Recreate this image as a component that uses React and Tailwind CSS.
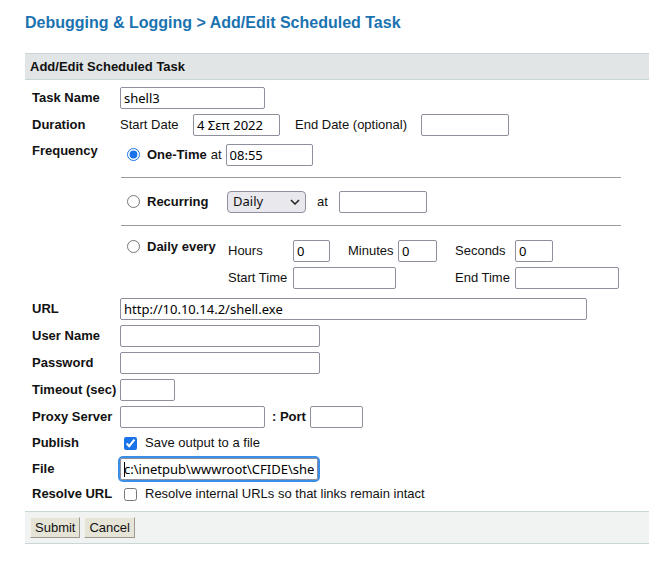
const inputCls =
  'h-[22px] border border-[#8f8f9d] rounded-[2px] bg-white px-[3px] text-[13px] text-black font-["Noto_Sans",sans-serif] outline-none';

function Field({ w, value = '' }) {
  return <input type="text" defaultValue={value} className={inputCls} style={{ width: w }} />;
}

function Row({ label, children, h = 'h-[27px]' }) {
  return (
    <div className={'flex items-center ' + h}>
      <div className="w-[95px] shrink-0 whitespace-nowrap pl-[7px] font-bold">{label}</div>
      <div className="flex items-center">{children}</div>
    </div>
  );
}

const Radio = ({ checked }) => (
  <input type="radio" name="freq" defaultChecked={checked} className="m-0 h-[13px] w-[13px] accent-[#1a73e8]" />
);

export default function App() {
  return (
    <div className='min-h-[563px] bg-white text-[13px] text-[#111] font-["Liberation_Sans",Arial,sans-serif]'>
      <h1 className="pl-[25px] pt-[13px] text-[16px] font-bold leading-[20px] text-[#1a73b0]">
        Debugging &amp; Logging &gt; Add/Edit Scheduled Task
      </h1>

      <div className="ml-[25px] mt-[20px]">
        <div className="flex h-[27px] items-center border-y border-[#c6d5d5] bg-[#e1e5e5] pl-[5px] font-bold">
          Add/Edit Scheduled Task
        </div>

        <div className="pt-[4px]">
          <Row label="Task Name">
            <Field w={145} value="shell3" />
          </Row>

          <Row label="Duration">
            <span className="w-[73px]">Start Date</span>
            <Field w={87} value="4 Σεπ 2022" />
            <span className="ml-[15px] w-[126px]">End Date (optional)</span>
            <Field w={88} />
          </Row>

          {/* frequency block */}
          <div className="flex">
            <div className="w-[95px] shrink-0 pl-[7px] pt-[3px] font-bold">Frequency</div>
            <div className="w-[501px] pb-[4px]">
              <div className="mt-[3px] flex h-[27px] items-center pl-[7px]">
                <Radio checked />
                <span className="ml-[7px] font-bold">One-Time</span>
                <span className="ml-[4px] mr-[4px]">at</span>
                <Field w={87} value="08:55" />
              </div>
              <div className="ml-[1px] mt-[9px] h-px bg-[#9a9a9a]" />
              <div className="mt-[10px] flex h-[27px] items-center pl-[7px]">
                <Radio />
                <span className="ml-[7px] w-[80px] font-bold">Recurring</span>
                <div className="relative">
                  <select className='h-[22px] w-[79px] appearance-none rounded-[4px] border border-[#8f8f9d] bg-[#e9e9ed] pl-[5px] text-[13px] font-["Noto_Sans",sans-serif] outline-none'>
                    <option>Daily</option>
                    <option>Weekly</option>
                    <option>Monthly</option>
                  </select>
                  <svg className="pointer-events-none absolute right-[6px] top-[8px]" width="10" height="6" viewBox="0 0 10 6">
                    <path d="M1 1l4 4 4-4" fill="none" stroke="#222" strokeWidth="1.5" />
                  </svg>
                </div>
                <span className="ml-[11px] w-[22px]">at</span>
                <Field w={88} />
              </div>
              <div className="ml-[1px] mt-[10px] h-px bg-[#9a9a9a]" />
              <div className="mt-[11px] flex">
                <div className="flex w-[108px] shrink-0 pl-[7px] pt-[3px]">
                  <Radio />
                  <span className="ml-[7px] -mt-[3px] font-bold">Daily every</span>
                </div>
                <div>
                  <div className="flex h-[27px] items-center">
                    <span className="w-[65px]">Hours</span>
                    <Field w={37} value="0" />
                    <span className="ml-[18px] w-[50px]">Minutes</span>
                    <Field w={39} value="0" />
                    <span className="ml-[18px] w-[60px]">Seconds</span>
                    <Field w={38} value="0" />
                  </div>
                  <div className="flex h-[27px] items-center">
                    <span className="w-[65px]">Start Time</span>
                    <Field w={103} />
                    <span className="ml-[59px] w-[60px]">End Time</span>
                    <Field w={104} />
                  </div>
                </div>
              </div>
            </div>
          </div>

          <Row label="URL">
            <Field w={467} value="http://10.10.14.2/shell.exe" />
          </Row>
          <Row label="User Name">
            <Field w={200} />
          </Row>
          <Row label="Password">
            <input type="password" className={inputCls} style={{ width: 200 }} />
          </Row>
          <Row label="Timeout (sec)">
            <Field w={55} />
          </Row>
          <Row label="Proxy Server">
            <Field w={145} />
            <span className="ml-[7px] mr-[4px] font-bold">: Port</span>
            <Field w={53} />
          </Row>
          <Row label="Publish" h="h-[26px]">
            <input type="checkbox" defaultChecked className="ml-[4px] h-[13px] w-[13px] accent-[#1a73e8]" />
            <span className="ml-[8px]">Save output to a file</span>
          </Row>
          <Row label="File" h="h-[25px]">
            <div className="relative rounded-[3px] ring-2 ring-[#3b8ee6]">
              <input
                type="text"
                defaultValue="c:\inetpub\wwwroot\CFIDE\shell.exe"
                className={inputCls + ' border-[#2a2a2a]'}
                style={{ width: 198 }}
              />
              <span className="absolute left-[4px] top-[4px] h-[15px] w-px bg-black" />
            </div>
          </Row>
          <Row label="Resolve URL" h="h-[26px]">
            <input type="checkbox" className="ml-[4px] h-[13px] w-[13px]" />
            <span className="ml-[8px]">Resolve internal URLs so that links remain intact</span>
          </Row>
        </div>

        <div className="mt-[4px] flex h-[33px] items-center gap-[4px] border-y border-[#c9d6d6] bg-[#f1f3f3] pl-[5px]">
          <button className="h-[21px] border border-t-[#f4f2ea] border-l-[#f4f2ea] border-r-[#9c9a90] border-b-[#9c9a90] bg-[#e6e3d7] px-[4px] text-[13px] leading-[19px]">
            Submit
          </button>
          <button className="h-[21px] border border-t-[#f4f2ea] border-l-[#f4f2ea] border-r-[#9c9a90] border-b-[#9c9a90] bg-[#e6e3d7] px-[4px] text-[13px] leading-[19px]">
            Cancel
          </button>
        </div>
      </div>
    </div>
  );
}
